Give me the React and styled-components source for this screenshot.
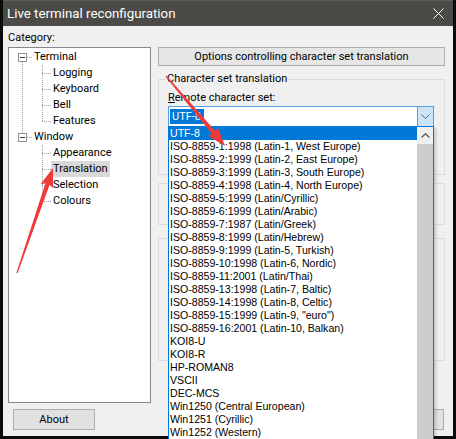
import React from 'react';
import styled, { createGlobalStyle, css } from 'styled-components';

const uiFont = `Roboto, "Liberation Sans", Arial, sans-serif`;
const listFont = `"Liberation Sans", Arial, sans-serif`;

const GlobalStyle = createGlobalStyle`
  html, body { margin: 0; padding: 0; background: #0c0c0c; }
  body { font-family: ${uiFont}; }
  * { box-sizing: border-box; }
`;

const Screen = styled.div`
  position: relative;
  width: 456px;
  height: 439px;
  overflow: hidden;
  padding-left: 3px;
`;

const Window = styled.div`
  width: 450px;
  height: 436px;
  background: #f0f0f0;
  display: flex;
  flex-direction: column;
`;

const TitleBar = styled.div`
  height: 26px;
  flex: none;
  background: #4b4a46;
  border-top: 1px solid #5d5c58;
  display: flex;
  align-items: center;
  justify-content: space-between;
  padding: 0 9px 0 4px;
  color: #fff;
  font-size: 13.3px;
`;

const Body = styled.div`
  flex: 1;
  min-height: 0;
  display: flex;
  gap: 7px;
  padding: 5px 8px 0 5px;
`;

const LeftCol = styled.div`
  width: 143px;
  display: flex;
  flex-direction: column;
`;

const RightCol = styled.div`
  flex: 1;
  min-width: 0;
  display: flex;
  flex-direction: column;
`;

const Caption = styled.div`
  font-size: 11px;
  line-height: 14px;
  height: 14px;
  color: #000;
`;

const TreeBox = styled.div`
  flex: 1;
  margin-top: 2px;
  background: #fff;
  border: 1px solid #828790;
  padding-top: 1px;
`;

const Branch = styled.div`
  position: relative;
  ${p => p.$hasNext && css`
    &::before {
      content: '';
      position: absolute;
      left: 13px;
      top: 13px;
      bottom: -4px;
      border-left: 1px dotted #a0a0a0;
    }
  `}
`;

const Children = styled.div`
  position: relative;
  &::before {
    content: '';
    position: absolute;
    left: 33px;
    top: 0;
    bottom: 8px;
    border-left: 1px dotted #a0a0a0;
  }
`;

const Row = styled.div`
  height: 16px;
  display: flex;
  align-items: center;
  padding-left: ${p => (p.$child ? 33 : 9)}px;
  font-size: 11px;
  color: #000;
`;

const Toggle = styled.div`
  width: 9px;
  height: 9px;
  border: 1px solid #919191;
  background: #fff;
  display: flex;
  align-items: center;
  justify-content: center;
  &::after {
    content: '';
    width: 5px;
    height: 1px;
    background: #3c3c3c;
  }
`;

const Connector = styled.div`
  width: ${p => p.$w}px;
  height: 0;
  border-top: 1px dotted #a0a0a0;
`;

const NodeLabel = styled.span`
  padding: 0 2px;
  line-height: 16px;
  background: ${p => (p.$selected ? '#d9d9d9' : 'transparent')};
`;

const Button = styled.div`
  height: 21px;
  width: ${p => p.$w || 75}px;
  background: #e1e1e1;
  border: 1px solid #adadad;
  display: flex;
  align-items: center;
  justify-content: center;
  font-size: 11px;
  color: #000;
`;

const AboutButton = styled(Button)`
  margin: 6px 0 6px 5px;
`;

const PanelTitle = styled.div`
  margin-top: 16px;
  height: 19px;
  background: #e6e6e6;
  border: 1px solid #adadad;
  display: flex;
  align-items: center;
  justify-content: center;
  font-size: 11px;
  color: #000;
`;

const Group = styled.fieldset`
  margin: 6px 0 0;
  padding: 5px 10px 47px 9px;
  border: 1px solid #dcdcdc;
  min-width: 0;
`;

const Legend = styled.legend`
  padding: 0 1px;
  margin-left: -2px;
  font-size: 11px;
  line-height: 14px;
  color: #000;
`;

const Frame = styled.div`
  margin-top: ${p => p.$mt}px;
  height: ${p => p.$h}px;
  border: 1px solid #dcdcdc;
`;

const FieldLabel = styled.div`
  font-size: 11px;
  line-height: 14px;
  height: 14px;
  color: #000;
`;

const Combo = styled.div`
  margin-top: 1px;
  height: 21px;
  display: flex;
  background: #fff;
  border: 1px solid #569de5;
`;

const ComboValue = styled.div`
  flex: 1;
  display: flex;
  align-items: center;
  padding-left: 1px;
`;

const Highlight = styled.span`
  background: #0078d7;
  color: #fff;
  font-size: 11px;
  line-height: 15px;
  padding: 0 3px 0 2px;
`;

const ComboArrow = styled.div`
  width: 16px;
  background: #cce4f7;
  border-left: 1px solid #569de5;
  display: flex;
  align-items: center;
  justify-content: center;
`;

const ButtonRow = styled.div`
  margin-top: auto;
  margin-bottom: 6px;
  margin-right: 1px;
  display: flex;
  justify-content: flex-end;
  gap: 6px;
`;

const DropList = styled.div`
  position: absolute;
  left: 168px;
  top: 126px;
  width: 266px;
  height: 330px;
  display: flex;
  background: #fff;
  border: 1px solid #0078d7;
  box-shadow: 2px 2px 3px rgba(0, 0, 0, 0.18);
`;

const Options = styled.div`
  flex: 1;
  min-width: 0;
`;

const Option = styled.div`
  height: 13px;
  line-height: 13px;
  padding-left: 1px;
  font-family: ${listFont};
  font-size: 10.6px;
  white-space: nowrap;
  color: ${p => (p.$selected ? '#fff' : '#000')};
  background: ${p => (p.$selected ? '#0078d7' : 'transparent')};
`;

const ScrollBar = styled.div`
  width: 16px;
  display: flex;
  flex-direction: column;
  background: #f0f0f0;
`;

const ScrollButton = styled.div`
  height: 17px;
  display: flex;
  align-items: center;
  justify-content: center;
`;

const ScrollThumb = styled.div`
  flex: 1;
  background: #cdcdcd;
`;

const Overlay = styled.svg`
  position: absolute;
  left: 0;
  top: 0;
  pointer-events: none;
`;

const encodings = [
  'UTF-8',
  'ISO-8859-1:1998 (Latin-1, West Europe)',
  'ISO-8859-2:1999 (Latin-2, East Europe)',
  'ISO-8859-3:1999 (Latin-3, South Europe)',
  'ISO-8859-4:1998 (Latin-4, North Europe)',
  'ISO-8859-5:1999 (Latin/Cyrillic)',
  'ISO-8859-6:1999 (Latin/Arabic)',
  'ISO-8859-7:1987 (Latin/Greek)',
  'ISO-8859-8:1999 (Latin/Hebrew)',
  'ISO-8859-9:1999 (Latin-5, Turkish)',
  'ISO-8859-10:1998 (Latin-6, Nordic)',
  'ISO-8859-11:2001 (Latin/Thai)',
  'ISO-8859-13:1998 (Latin-7, Baltic)',
  'ISO-8859-14:1998 (Latin-8, Celtic)',
  'ISO-8859-15:1999 (Latin-9, "euro")',
  'ISO-8859-16:2001 (Latin-10, Balkan)',
  'KOI8-U',
  'KOI8-R',
  'HP-ROMAN8',
  'VSCII',
  'DEC-MCS',
  'Win1250 (Central European)',
  'Win1251 (Cyrillic)',
  'Win1252 (Western)',
];

const tree = [
  { name: 'Terminal', children: ['Logging', 'Keyboard', 'Bell', 'Features'] },
  { name: 'Window', children: ['Appearance', 'Translation', 'Selection', 'Colours'] },
];

// tapered annotation arrow, tail -> tip
function arrowPoints(tx, ty, hx, hy) {
  const len = Math.hypot(hx - tx, hy - ty);
  const dx = (hx - tx) / len;
  const dy = (hy - ty) / len;
  const nx = -dy;
  const ny = dx;
  const L = 17, W = 6.5, s0 = 0.6, s1 = 2.2;
  const bx = hx - dx * L;
  const by = hy - dy * L;
  const pts = [
    [tx + nx * s0, ty + ny * s0],
    [bx + nx * s1, by + ny * s1],
    [bx - dx * 2 + nx * W, by - dy * 2 + ny * W],
    [hx, hy],
    [bx - dx * 2 - nx * W, by - dy * 2 - ny * W],
    [bx - nx * s1, by - ny * s1],
    [tx - nx * s0, ty - ny * s0],
  ];
  return pts.map(p => p.map(v => v.toFixed(1)).join(',')).join(' ');
}

export default function App() {
  return (
    <Screen>
      <GlobalStyle />
      <Window>
        <TitleBar>
          <span>Live terminal reconfiguration</span>
          <svg width="11" height="11" viewBox="0 0 11 11">
            <path d="M0.5 0.5 L10.5 10.5 M10.5 0.5 L0.5 10.5" stroke="#fff" strokeWidth="1" />
          </svg>
        </TitleBar>
        <Body>
          <LeftCol>
            <Caption>Cate<u>g</u>ory:</Caption>
            <TreeBox>
              {tree.map((node, i) => (
                <Branch key={node.name} $hasNext={i < tree.length - 1}>
                  <Row>
                    <Toggle />
                    <Connector $w={5} />
                    <NodeLabel>{node.name}</NodeLabel>
                  </Row>
                  <Children>
                    {node.children.map(c => (
                      <Row key={c} $child>
                        <Connector $w={9} />
                        <NodeLabel $selected={c === 'Translation'}>{c}</NodeLabel>
                      </Row>
                    ))}
                  </Children>
                </Branch>
              ))}
            </TreeBox>
            <AboutButton $w={82}>About</AboutButton>
          </LeftCol>
          <RightCol>
            <PanelTitle>Options controlling character set translation</PanelTitle>
            <Group>
              <Legend>Character set translation</Legend>
              <FieldLabel><u>R</u>emote character set:</FieldLabel>
              <Combo>
                <ComboValue>
                  <Highlight>UTF-8</Highlight>
                </ComboValue>
                <ComboArrow>
                  <svg width="9" height="5" viewBox="0 0 9 5">
                    <path d="M0.5 0.5 L4.5 4.5 L8.5 0.5" fill="none" stroke="#606060" strokeWidth="1" />
                  </svg>
                </ComboArrow>
              </Combo>
            </Group>
            <Frame $mt={8} $h={42} />
            <Frame $mt={13} $h={123} />
            <ButtonRow>
              <Button>Apply</Button>
              <Button>Cancel</Button>
            </ButtonRow>
          </RightCol>
        </Body>
      </Window>

      <DropList>
        <Options>
          {encodings.map(e => (
            <Option key={e} $selected={e === 'UTF-8'}>{e}</Option>
          ))}
        </Options>
        <ScrollBar>
          <ScrollButton>
            <svg width="9" height="5" viewBox="0 0 9 5">
              <path d="M0.5 4.5 L4.5 0.8 L8.5 4.5" fill="none" stroke="#606060" strokeWidth="1.4" />
            </svg>
          </ScrollButton>
          <ScrollThumb />
        </ScrollBar>
      </DropList>

      <Overlay width="456" height="439" viewBox="0 0 456 439">
        <polygon points={arrowPoints(166, 76, 225, 146)} fill="#f03a3a" />
        <polygon points={arrowPoints(17, 273, 53, 168)} fill="#f03a3a" />
      </Overlay>
    </Screen>
  );
}
